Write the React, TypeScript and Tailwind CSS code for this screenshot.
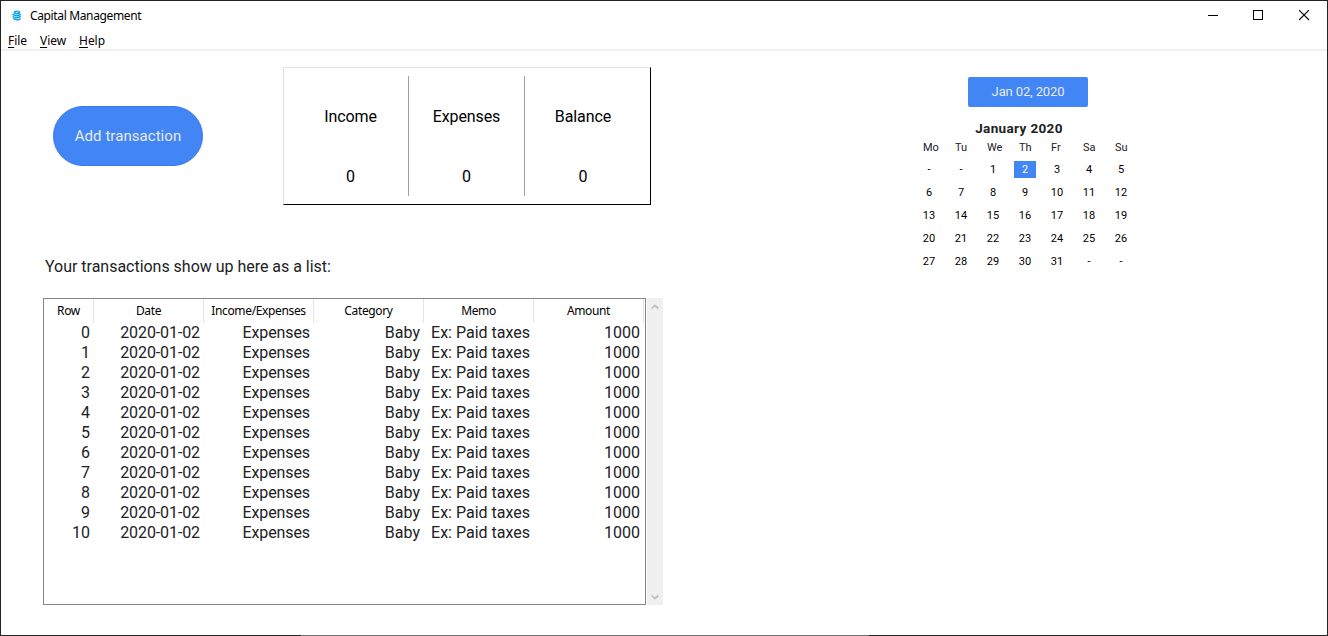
const columns = [
  { label: 'Row', width: 'w-[50px]' },
  { label: 'Date', width: 'w-[110px]' },
  { label: 'Income/Expenses', width: 'w-[110px]' },
  { label: 'Category', width: 'w-[110px]' },
  { label: 'Memo', width: 'w-[110px]' },
  { label: 'Amount', width: 'w-[110px]' },
];

const rows = Array.from({ length: 11 }, (_, i) => [
  String(i), '2020-01-02', 'Expenses', 'Baby', 'Ex: Paid taxes', '1000',
]);

const weekdays = ['Mo', 'Tu', 'We', 'Th', 'Fr', 'Sa', 'Su'];
const days = ['-', '-', ...Array.from({ length: 31 }, (_, i) => String(i + 1)), '-', '-'];

function TitleBar() {
  return (
    <div className="flex h-[30px] items-center pl-[11px] font-['Noto_Sans',sans-serif] text-[12px] text-black">
      <svg width="10" height="11" viewBox="0 0 10 11" fill="none" className="mb-[2px] shrink-0">
        <ellipse cx="5" cy="2.500" rx="3.300" ry="2" fill="#12a5ea" />
        <path d="M.8 3.800c.8 2.200 5.500 2.600 8 .6M.8 6c1 2 5.500 2.400 8 .4M1.200 8.200c1.200 1.900 5.600 2.200 7.400.3" stroke="#12a5ea" strokeWidth="1.500" />
        <path d="M3.500 3l2.800-1.200" stroke="#fff" strokeWidth=".8" />
      </svg>
      <span className="ml-[8px] tracking-[-0.36px]">Capital Management</span>
      <div className="ml-auto flex items-center pb-[2px] pr-[17px]">
        <svg width="11" height="11" shapeRendering="crispEdges"><path d="M0 5.500h10" stroke="#000" /></svg>
        <svg width="11" height="11" shapeRendering="crispEdges" className="ml-[34px]"><path d="M.5.5h9v9h-9z" fill="none" stroke="#000" /></svg>
        <svg width="11" height="11" className="ml-[35px]"><path d="M0 0l10 10M10 0L0 10" stroke="#000" strokeWidth="1.100" /></svg>
      </div>
    </div>
  );
}

function MenuBar() {
  return (
    <div className="flex h-[20px] gap-[13px] border-b-2 border-[#f0f0f0] pl-[7px] font-['Noto_Sans',sans-serif] text-[12px] leading-[20px] tracking-[-0.05px] text-black">
      {['File', 'View', 'Help'].map((item) => (
        <span key={item}>
          <span className="underline underline-offset-2">{item[0]}</span>
          {item.slice(1)}
        </span>
      ))}
    </div>
  );
}

function Summary() {
  return (
    <div className="flex h-[138px] w-[368px] border border-b-black border-l-[#e3e3e3] border-r-black border-t-[#e3e3e3] pb-[8px] pl-[9px] pt-[8px] tracking-[-0.1px] text-black">
      {['Income', 'Expenses', 'Balance'].map((label, i) => (
        <div
          key={label}
          className={`flex w-[116px] flex-col items-center pt-[31px] ${i < 2 ? 'border-r border-[#a0a0a0]' : ''}`}
        >
          <span className="leading-[20px]">{label}</span>
          <span className="mt-[40px] leading-[20px]">0</span>
        </div>
      ))}
    </div>
  );
}

function Transactions() {
  return (
    <div className="flex h-[307px]">
      <div className="w-[603px] border border-[#828790]">
        <div className="flex h-[24px] font-['Noto_Sans',sans-serif] text-[12px] tracking-[-0.36px] text-black">
          {columns.map((c) => (
            <div key={c.label} className={`${c.width} flex items-center justify-center border-r border-[#e5e5e5]`}>
              {c.label}
            </div>
          ))}
        </div>
        {rows.map((r) => (
          <div key={r[0]} className="flex h-[20px] leading-[20px]">
            {r.map((value, i) => (
              <div
                key={i}
                className={`${columns[i].width} whitespace-nowrap pr-[4px] text-right ${i === 1 || i === 2 ? 'tracking-[-0.1px]' : ''}`}
              >
                {value}
              </div>
            ))}
          </div>
        ))}
      </div>
      <div className="ml-px flex w-[16px] flex-col items-center justify-between bg-[#f0f0f0] pb-[4px] pt-[5px]">
        <svg width="8" height="8" viewBox="0 0 8 8"><path d="M.7 5.700L4 2.400l3.300 3.300" fill="none" stroke="#bfbfbf" strokeWidth="1.800" /></svg>
        <svg width="8" height="8" viewBox="0 0 8 8"><path d="M.7 2.300L4 5.600l3.300-3.300" fill="none" stroke="#bfbfbf" strokeWidth="1.800" /></svg>
      </div>
    </div>
  );
}

function Calendar() {
  return (
    <div className="flex w-[224px] flex-col items-center text-[11px]">
      <button className="ml-[6px] h-[30px] w-[120px] rounded-[2px] bg-[#4285f4] text-[13px] tracking-[-0.12px] text-[#e8eaed]">Jan 02, 2020</button>
      <div className="mt-[11px] pr-[12px] text-[13.5px] font-bold leading-[20px] tracking-[0.36px]">January 2020</div>
      <div className="mt-px grid w-full grid-cols-7 leading-[18px]">
        {weekdays.map((d) => (
          <span key={d} className="pl-[10px]">{d}</span>
        ))}
      </div>
      <div className="mt-px grid w-full grid-cols-7 justify-items-center text-black">
        {days.map((d, i) => (
          <div key={i} className="flex h-[23px] items-center">
            <span className={`h-[17px] w-[22px] text-center leading-[17px] ${d === '2' ? 'bg-[#4285f4] text-white' : ''}`}>{d}</span>
          </div>
        ))}
      </div>
    </div>
  );
}

export default function App() {
  return (
    <div className="flex h-[636px] w-[1328px] flex-col border border-[#232126] bg-white font-[Roboto,sans-serif] text-[16px] text-[#202124]">
      <TitleBar />
      <MenuBar />
      <div className="flex flex-1 pl-[42px]">
        <div className="flex w-[620px] flex-col">
          <div className="flex items-center pl-[10px] pt-[16px]">
            <button className="h-[60px] w-[150px] rounded-full border border-[#357ae8] bg-[#4285f4] text-[15px] tracking-[0.05px] text-[#e8eaed]">Add transaction</button>
            <div className="ml-[80px]"><Summary /></div>
          </div>
          <div className="mb-[21px] mt-[52px] pl-[2px] leading-[20px] tracking-[-0.02px]">Your transactions show up here as a list:</div>
          <Transactions />
        </div>
        <div className="ml-[250px] pt-[26px]">
          <Calendar />
        </div>
      </div>
      <div className="-mb-px ml-[300px] h-px w-[568px] bg-[#727074]" />
    </div>
  );
}
